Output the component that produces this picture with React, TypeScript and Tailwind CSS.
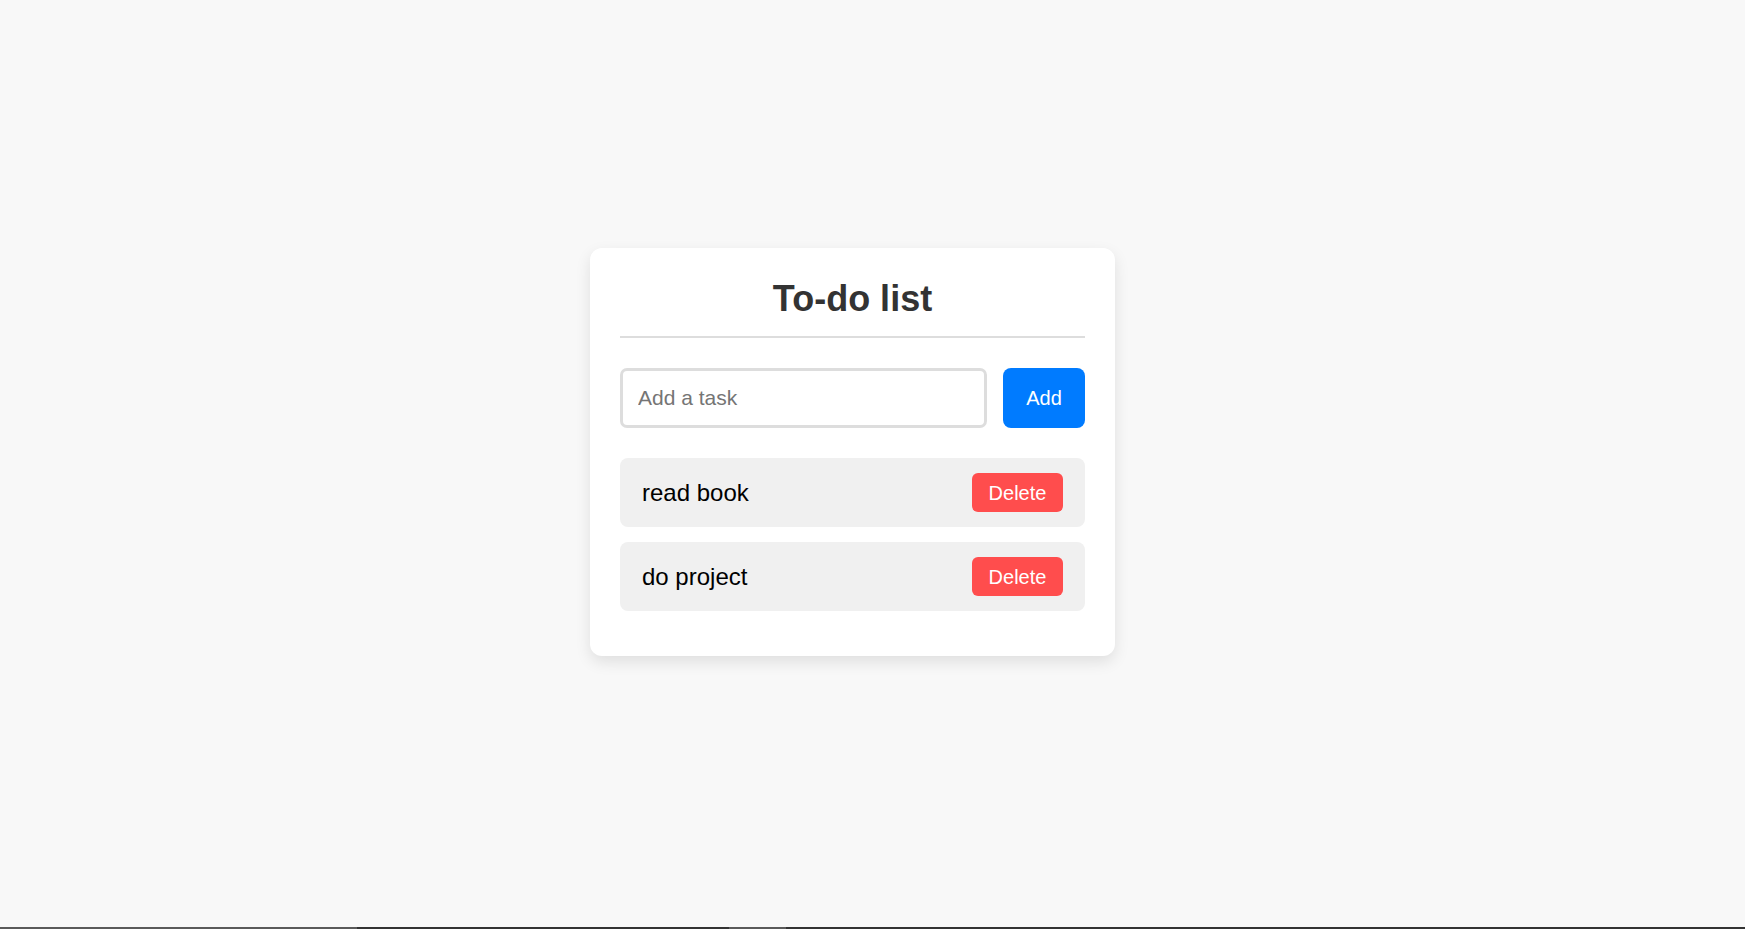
import { useState } from "react";

interface Task {
  id: number;
  text: string;
}

const TaskRow = ({ task, onDelete }: { task: Task; onDelete: (id: number) => void }) => {
  return (
    <li className="flex items-center justify-between h-[69px] px-[22px] mb-[15px] bg-[#f0f0f0] rounded-[8px]">
      <span className="text-[24px] text-black">{task.text}</span>
      <button
        onClick={() => onDelete(task.id)}
        className="w-[91px] h-[39px] flex items-center justify-center bg-[#ff4d4d] text-white text-[20px] rounded-[6px]"
      >
        Delete
      </button>
    </li>
  );
};

export default function App() {
  const [tasks, setTasks] = useState<Task[]>([
    { id: 1, text: "read book" },
    { id: 2, text: "do project" },
  ]);
  const [input, setInput] = useState("");

  const addTask = () => {
    if (!input.trim()) return;
    setTasks((t) => [...t, { id: Date.now(), text: input.trim() }]);
    setInput("");
  };

  const deleteTask = (id: number) => {
    setTasks((t) => t.filter((x) => x.id !== id));
  };

  return (
    <div className="h-screen flex flex-col bg-[#f8f8f8] font-['Liberation_Sans',Arial,sans-serif]">
      <div className="flex-1 flex justify-center items-start pt-[248px] pr-[40px]">
        <div className="w-[525px] bg-white rounded-[12px] p-[30px] shadow-[0_6px_15px_rgba(0,0,0,0.1)]">
          <h1 className="text-[36px] leading-[41px] font-bold text-[#333] text-center pb-[17px] border-b-2 border-[#ddd]">
            To-do list
          </h1>
          <div className="flex gap-[16px] mt-[30px]">
            <input
              value={input}
              onChange={(e) => setInput(e.target.value)}
              placeholder="Add a task"
              className="flex-1 min-w-0 h-[60px] px-[15px] text-[21px] border-[3px] border-[#ddd] rounded-[7px] outline-none placeholder:text-[#757575]"
            />
            <button
              onClick={addTask}
              className="w-[82px] h-[60px] bg-[#007bff] text-white text-[20px] rounded-[8px]"
            >
              Add
            </button>
          </div>
          <ul className="mt-[30px]">
            {tasks.map((t) => (
              <TaskRow key={t.id} task={t} onDelete={deleteTask} />
            ))}
          </ul>
        </div>
      </div>
      <div className="flex h-[2px]">
        <div className="w-[357px] bg-[#5a5a5a]" />
        <div className="w-[372px] bg-[#333]" />
        <div className="w-[57px] bg-[#5a5a5a]" />
        <div className="flex-1 bg-[#333]" />
      </div>
    </div>
  );
}
